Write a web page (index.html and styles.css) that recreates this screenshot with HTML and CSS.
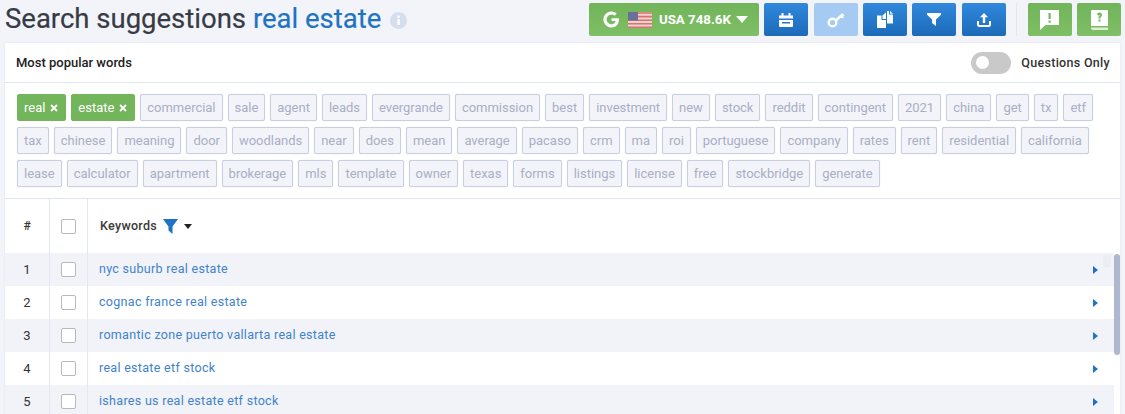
FILE: index.html
```html
<!DOCTYPE html>
<html lang="en">
<head>
<meta charset="utf-8">
<title>Search suggestions</title>
<link rel="stylesheet" href="styles.css">
</head>
<body>
<header class="top">
  <h1 class="title">Search suggestions <span class="query">real estate</span></h1>
  <svg class="info" width="17" height="17" viewBox="0 0 17 17"><circle cx="8.5" cy="8.5" r="8.5" fill="#d5deec"/><rect x="7.4" y="7" width="2.4" height="6" fill="#fff"/><rect x="7.4" y="3.6" width="2.4" height="2.2" fill="#fff"/></svg>
  <div class="actions">
    <button class="btn green db">
      <svg class="g" width="17" height="17" viewBox="0 0 17 17"><path d="M15.8 7.2H8.6v2.900h4.100c-.5 2-2.100 3.300-4.200 3.300a4.900 4.900 0 1 1 3.100-8.700l2.100-2.200A8 8 0 1 0 8.500 16.500c4.800 0 7.900-3.700 7.300-9.300z" fill="#fff"/></svg>
      <svg class="flag" width="24" height="16" viewBox="0 0 24 16"><rect width="24" height="16" fill="#efd3cf"/><path d="M0 1h24M0 4.600h24M0 8.200h24M0 11.800h24M0 15.200h24" stroke="#d8736f" stroke-width="1.600"/><rect width="10" height="8.500" fill="#69709a"/></svg>
      <span class="db-label">USA 748.6K</span>
      <svg width="12" height="7" viewBox="0 0 12 7"><path d="M0 0h12L6 7z" fill="#fff"/></svg>
    </button>
    <button class="btn blue ic"><svg width="14" height="14" viewBox="0 0 14 14"><path d="M0 2.500h2.500V0h2v2.500h5V0h2v2.500H14V5.500H0z" fill="#fff"/><path d="M0 7h14v6a1 1 0 0 1-1 1H1a1 1 0 0 1-1-1zM3 9v1.500h8V9z" fill="#fff" fill-rule="evenodd"/></svg></button>
    <button class="btn pale ic"><svg width="18" height="16" viewBox="0 0 18 16"><circle cx="5.500" cy="10.500" r="3.800" fill="none" stroke="#fff" stroke-width="2.400"/><path d="M8 7.500 15 1.200 17.500 3l-1.300 1.300.7 1-1.800 1.200-1-1L9.500 9.500z" fill="#fff"/></svg></button>
    <button class="btn blue ic"><svg width="16" height="17" viewBox="0 0 16 17"><path d="M0 4.500h4.500V9H9v8H0z" fill="#fff"/><path d="M5.500 4.500 9 1.500V8H5.500z" fill="#fff"/><path d="M10 8.500V0h2v3.500h4v9h-6z" fill="#fff" opacity=".95"/><path d="M13 0l3 2.700h-3z" fill="#fff"/></svg></button>
    <button class="btn blue ic"><svg width="14" height="13" viewBox="0 0 14 13"><path d="M0 0h14v1.800L9 6.500V13L5 10V6.500L0 1.800z" fill="#fff"/></svg></button>
    <button class="btn blue ic"><svg width="14" height="14" viewBox="0 0 14 14"><path d="M7 0l4 4.200H8.200V10H5.800V4.200H3z" fill="#fff"/><path d="M1 8v3.500A1.500 1.500 0 0 0 2.500 13h9a1.500 1.500 0 0 0 1.500-1.500V8" fill="none" stroke="#fff" stroke-width="2"/></svg></button>
    <span class="divider"></span>
    <button class="btn green ic"><svg width="19" height="20" viewBox="0 0 19 20"><path d="M0 0h19v15H5.500L0 20z" fill="#fff"/><rect x="8.500" y="3" width="2.200" height="6" fill="#74b85c"/><rect x="8.500" y="10.500" width="2.200" height="2.200" fill="#74b85c"/></svg></button>
    <button class="btn green ic"><svg width="17" height="20" viewBox="0 0 17 20"><path d="M1 0h15a1 1 0 0 1 1 1v15H0V1a1 1 0 0 1 1-1z" fill="#fff"/><path d="M0 17.500h17V20H2a2 2 0 0 1-2-2z" fill="#fff" opacity=".75"/><rect x="7.500" y="9.500" width="2" height="2" fill="#74b85c"/><path d="M6 5a2.500 2.500 0 1 1 3.500 2.300v1.200h-2V6.500c1-.2 1.200-.7 1-1.200-.3-.4-.8-.3-.8.300z" fill="#74b85c"/></svg></button>
  </div>
</header>
<main class="card">
  <div class="card-head">
    <strong class="head-label">Most popular words</strong>
    <div class="toggle-wrap"><span class="toggle"><span class="knob"></span></span><span class="toggle-label">Questions Only</span></div>
  </div>
  <div class="tags">
    <span class="tag on">real <svg class="x" width="8" height="8" viewBox="0 0 8 8"><path d="M1 1l6 6M7 1L1 7" stroke="#fff" stroke-width="1.800"/></svg></span><span class="tag on">estate <svg class="x" width="8" height="8" viewBox="0 0 8 8"><path d="M1 1l6 6M7 1L1 7" stroke="#fff" stroke-width="1.800"/></svg></span><span class="tag">commercial</span><span class="tag">sale</span><span class="tag">agent</span><span class="tag">leads</span><span class="tag">evergrande</span><span class="tag">commission</span><span class="tag">best</span><span class="tag">investment</span><span class="tag">new</span><span class="tag">stock</span><span class="tag">reddit</span><span class="tag">contingent</span><span class="tag">2021</span><span class="tag">china</span><span class="tag">get</span><span class="tag">tx</span><span class="tag">etf</span><span class="tag">tax</span><span class="tag">chinese</span><span class="tag">meaning</span><span class="tag">door</span><span class="tag">woodlands</span><span class="tag">near</span><span class="tag">does</span><span class="tag">mean</span><span class="tag">average</span><span class="tag">pacaso</span><span class="tag">crm</span><span class="tag">ma</span><span class="tag">roi</span><span class="tag">portuguese</span><span class="tag">company</span><span class="tag">rates</span><span class="tag">rent</span><span class="tag">residential</span><span class="tag">california</span><span class="tag">lease</span><span class="tag">calculator</span><span class="tag">apartment</span><span class="tag">brokerage</span><span class="tag">mls</span><span class="tag">template</span><span class="tag">owner</span><span class="tag">texas</span><span class="tag">forms</span><span class="tag">listings</span><span class="tag">license</span><span class="tag">free</span><span class="tag">stockbridge</span><span class="tag">generate</span>
  </div>
  <div class="table">
    <div class="row thead">
      <div class="c-num">#</div>
      <div class="c-check"><span class="box"></span></div>
      <div class="c-key"><span class="th-label">Keywords</span>
        <svg class="th-filter" width="15" height="15" viewBox="0 0 15 15"><path d="M0 0h15L9.500 7.500V15L5.500 11.500V7.500z" fill="#1f73c6"/></svg>
        <svg class="th-caret" width="8" height="5" viewBox="0 0 8 5"><path d="M0 0h8L4 5z" fill="#222"/></svg>
      </div>
    </div>
    <div class="row alt"><div class="c-num">1</div><div class="c-check"><span class="box"></span></div><div class="c-key"><a>nyc suburb real estate</a></div><svg class="arrow" width="5" height="8" viewBox="0 0 5 8"><path d="M0 0l5 4-5 4z"/></svg></div>
    <div class="row"><div class="c-num">2</div><div class="c-check"><span class="box"></span></div><div class="c-key"><a>cognac france real estate</a></div><svg class="arrow" width="5" height="8" viewBox="0 0 5 8"><path d="M0 0l5 4-5 4z"/></svg></div>
    <div class="row alt"><div class="c-num">3</div><div class="c-check"><span class="box"></span></div><div class="c-key"><a>romantic zone puerto vallarta real estate</a></div><svg class="arrow" width="5" height="8" viewBox="0 0 5 8"><path d="M0 0l5 4-5 4z"/></svg></div>
    <div class="row"><div class="c-num">4</div><div class="c-check"><span class="box"></span></div><div class="c-key"><a>real estate etf stock</a></div><svg class="arrow" width="5" height="8" viewBox="0 0 5 8"><path d="M0 0l5 4-5 4z"/></svg></div>
    <div class="row alt"><div class="c-num">5</div><div class="c-check"><span class="box"></span></div><div class="c-key"><a>ishares us real estate etf stock</a></div><svg class="arrow" width="5" height="8" viewBox="0 0 5 8"><path d="M0 0l5 4-5 4z"/></svg></div>
    <span class="scroll-hint"></span>
    <span class="scrollbar"></span>
  </div>
</main>
</body>
</html>
```
FILE: styles.css
```css
* { box-sizing: border-box; }
html, body { margin: 0; height: 414px; overflow: hidden; }
body { background: #f2f4f9; font-family: Roboto, sans-serif; color: #222; }

.top { display: flex; align-items: center; height: 43px; padding: 0 4px 4px 5px; }
.title { margin: 0 0 2px; font-size: 27.500px; font-weight: 400; color: #363b46; line-height: 37px; white-space: nowrap; -webkit-text-stroke: .2px currentColor; }
.query { color: #1f73c0; }
.info { margin-left: 9px; margin-top: 2px; }
.actions { display: flex; align-items: center; gap: 5.400px; margin-left: auto; }
.btn { display: flex; align-items: center; justify-content: center; height: 33px; border: 0; border-radius: 2px; padding: 0; font-family: inherit; }
.ic { width: 44px; }
.green { background: linear-gradient(#71b45a, #7fbf66); color: #fff; }
.blue { background: linear-gradient(#3088dc, #1c6bb9); }
.pale { background: #a6cbf3; }
.db { justify-content: flex-start; width: 170px; padding-left: 14px; font-size: 13.300px; font-weight: 700; }
.g { margin-right: 8px; }
.flag { margin-right: 7px; }
.db-label { margin-right: 5px; }
.divider { width: 1px; height: 33px; background: #e3e7f0; margin: 0 5px; }

.card { margin: 0 5px; background: #fff; height: 371px; box-shadow: 0 0 2px #dde2f0; }
.card-head { display: flex; align-items: center; justify-content: space-between; height: 40px; padding: 0 10px 0 11px; border-bottom: 1px solid #dfe4f0; }
.head-label { font-size: 13px; font-weight: 500; color: #222; }
.toggle-wrap { display: flex; align-items: center; gap: 10px; }
.toggle { display: flex; align-items: center; width: 40px; height: 22px; border-radius: 11px; background: #c9c9c9; padding-left: 5px; }
.knob { width: 13px; height: 13px; border-radius: 50%; background: #fff; }
.toggle-label { font-size: 12.500px; font-weight: 500; color: #333; letter-spacing: .3px; }

.tags { display: flex; flex-wrap: wrap; align-content: flex-start; gap: 6px 5px; height: 116px; padding: 11px 8px 0 12px; border-bottom: 1px solid #dfe4f0; }
.tag { display: flex; align-items: center; height: 27px; padding: 0 6px; border: 1px solid #c9cfe0; border-radius: 2px; font-size: 13px; color: #a8afc6; background: #f3f4f9; box-shadow: 0 0 1px #c9cfe0; letter-spacing: -.02px; white-space: nowrap; }
.tag.on { background: #72b55a; border-color: #72b55a; color: #fff; box-shadow: none; }
.x { margin-left: 5px; margin-right: 1px; }

.table { position: relative; }
.row { display: flex; align-items: stretch; height: 33px; margin-right: 6px; padding-right: 16px; }
.row.thead { height: 54px; padding-right: 0; }
.row.alt { background: #f2f3f8; }
.c-num { display: flex; align-items: center; justify-content: center; width: 45px; padding-bottom: 1px; font-size: 13px; color: #333; border-right: 1px solid #e3e7f2; }
.thead .c-num { font-size: 12px; font-weight: 500; }
.c-check { display: flex; align-items: center; justify-content: center; width: 38px; border-right: 1px solid #e3e7f2; }
.box { width: 15px; height: 15px; border: 1px solid #b9b9b9; border-radius: 2px; background: #fff; }
.c-key { display: flex; flex: 1; align-items: center; padding: 0 0 2px 11px; font-size: 12.500px; letter-spacing: .3px; }
.th-filter { margin-left: 6px; margin-top: 2px; }
.th-caret { margin-left: 6px; margin-top: 2px; }
.th-label { margin-left: 1px; font-weight: 500; color: #3a3a3a; }
.c-key a { color: #3f82cc; }
.arrow { align-self: center; fill: #1f73c6; }
.scroll-hint { position: absolute; right: 9px; top: 56px; width: 8px; height: 12px; background: #eceef4; }
.scrollbar { position: absolute; right: 0; top: 55px; width: 6px; height: 101px; border-radius: 3px; background: #aeb7d0; }
```
